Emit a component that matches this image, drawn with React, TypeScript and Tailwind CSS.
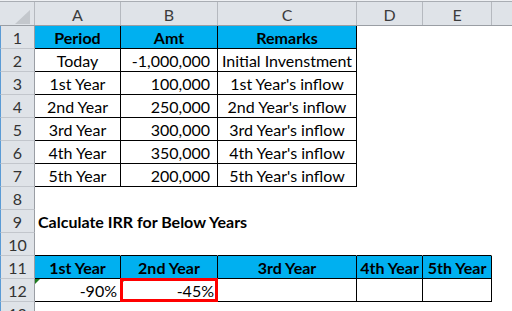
import React from "react";

type CellSpec = {
  text?: string;
  bold?: boolean;
  fill?: boolean;
  align?: "left" | "center" | "right";
  rb?: boolean; // black right border
  bb?: boolean; // black bottom border
  pr?: string;
  flag?: boolean; // green error triangle
  selected?: boolean;
};

const COLS = ["w-[86px]", "w-[97px]", "w-[139px]", "w-[66px]", "w-[69px]"];
const LETTERS = ["A", "B", "C", "D", "E"];

const t = (text: string, extra: Partial<CellSpec> = {}): CellSpec => ({ text, rb: true, bb: true, ...extra });
const hd = (text: string): CellSpec => ({ text, bold: true, fill: true, align: "center", rb: true, bb: true });
const num = (text: string): CellSpec => ({ text, align: "right", pr: "pr-[7px]", rb: true, bb: true });
const blank: CellSpec = {};

const ROWS: CellSpec[][] = [
  [hd("Period"), hd("Amt"), hd("Remarks"), blank, blank],
  [t("Today", { align: "center" }), num("-1,000,000"), t("Initial Invenstment", { align: "center" }), blank, blank],
  [t("1st Year", { align: "center" }), num("100,000"), t("1st Year's inflow", { align: "center" }), blank, blank],
  [t("2nd Year", { align: "center" }), num("250,000"), t("2nd Year's inflow", { align: "center" }), blank, blank],
  [t("3rd Year", { align: "center" }), num("300,000"), t("3rd Year's inflow", { align: "center" }), blank, blank],
  [t("4th Year", { align: "center" }), num("350,000"), t("4th Year's inflow", { align: "center" }), blank, blank],
  [t("5th Year", { align: "center" }), num("200,000"), t("5th Year's inflow", { align: "center" }), blank, blank],
  [blank, blank, blank, blank, blank],
  [{ text: "Calculate IRR for Below Years", bold: true, align: "left" }, blank, blank, blank, blank],
  [{ bb: true }, { bb: true }, { bb: true }, { bb: true }, { bb: true }],
  [hd("1st Year"), hd("2nd Year"), hd("3rd Year"), hd("4th Year"), hd("5th Year")],
  [
    { text: "-90%", align: "right", pr: "pr-[3px]", rb: true, bb: true, flag: true },
    { text: "-45%", align: "right", pr: "pr-[3px]", rb: true, bb: true, flag: true, selected: true },
    { rb: true, bb: true },
    { rb: true, bb: true },
    { rb: true, bb: true },
  ],
  [blank, blank, blank, blank, blank],
];

function Cell({ c, w }: { c: CellSpec; w: string }) {
  const justify = c.align === "right" ? "justify-end" : c.align === "center" ? "justify-center" : "justify-start";
  return (
    <div
      className={`relative flex h-full shrink-0 items-center pt-[2px] whitespace-nowrap border-r border-b ${w} ${justify} ${
        c.rb ? "border-r-black" : "border-r-transparent"
      } ${c.bb ? "border-b-black" : "border-b-transparent"} ${c.fill ? "bg-[#00b0f0]" : "bg-white"} ${
        c.bold ? "font-bold" : ""
      } ${c.align === "left" ? "pl-[3px]" : ""} ${c.pr ?? ""} overflow-visible`}
    >
      {c.flag && (
        <span className="absolute left-0 top-0 h-0 w-0 border-t-[5px] border-r-[5px] border-t-[#1e7b1e] border-r-transparent" />
      )}
      <span className="relative z-10">{c.text}</span>
      {c.selected && (
        <span className="pointer-events-none absolute -left-px -top-px -right-px -bottom-px border-[3px] border-[#ff0000] z-20" />
      )}
    </div>
  );
}

export default function App() {
  return (
    <div className="h-[311px] w-[512px] overflow-hidden bg-white text-[16px] leading-none text-black font-['Lato',sans-serif]">
      <div className="h-px bg-[#eef0f3]" />
      <div className="flex h-[25px] border-t border-b border-t-[#a9adb3] border-b-[#9a9ea4] bg-[#dfe3e8] text-[#3c3c3c]">
        <div className="relative h-full w-[35px] shrink-0 border-r border-[#b5b9bf]">
          <svg className="absolute left-[15px] top-[8px]" width="15" height="14" viewBox="0 0 15 14">
            <polygon points="15,0 15,14 0,14" fill="#c3c7cc" />
          </svg>
        </div>
        {LETTERS.map((l, i) => (
          <div key={l} className={`flex h-full shrink-0 items-center justify-center pt-[2px] border-r border-[#b5b9bf] ${COLS[i]}`}>
            {l}
          </div>
        ))}
        <div className="flex-1" />
      </div>
      {ROWS.map((row, r) => (
        <div key={r} className="flex h-[23px]">
          <div className="flex h-full w-[35px] shrink-0 items-center justify-center pt-[2px] border-l border-r border-b border-l-[#5b9bd5] border-r-[#9a9ea4] border-b-[#c2c6cc] bg-[#dfe3e8] text-[#333]">
            {r + 1}
          </div>
          {row.map((c, i) => (
            <Cell key={i} c={c} w={COLS[i]} />
          ))}
          <div className="flex-1 bg-white" />
        </div>
      ))}
    </div>
  );
}
